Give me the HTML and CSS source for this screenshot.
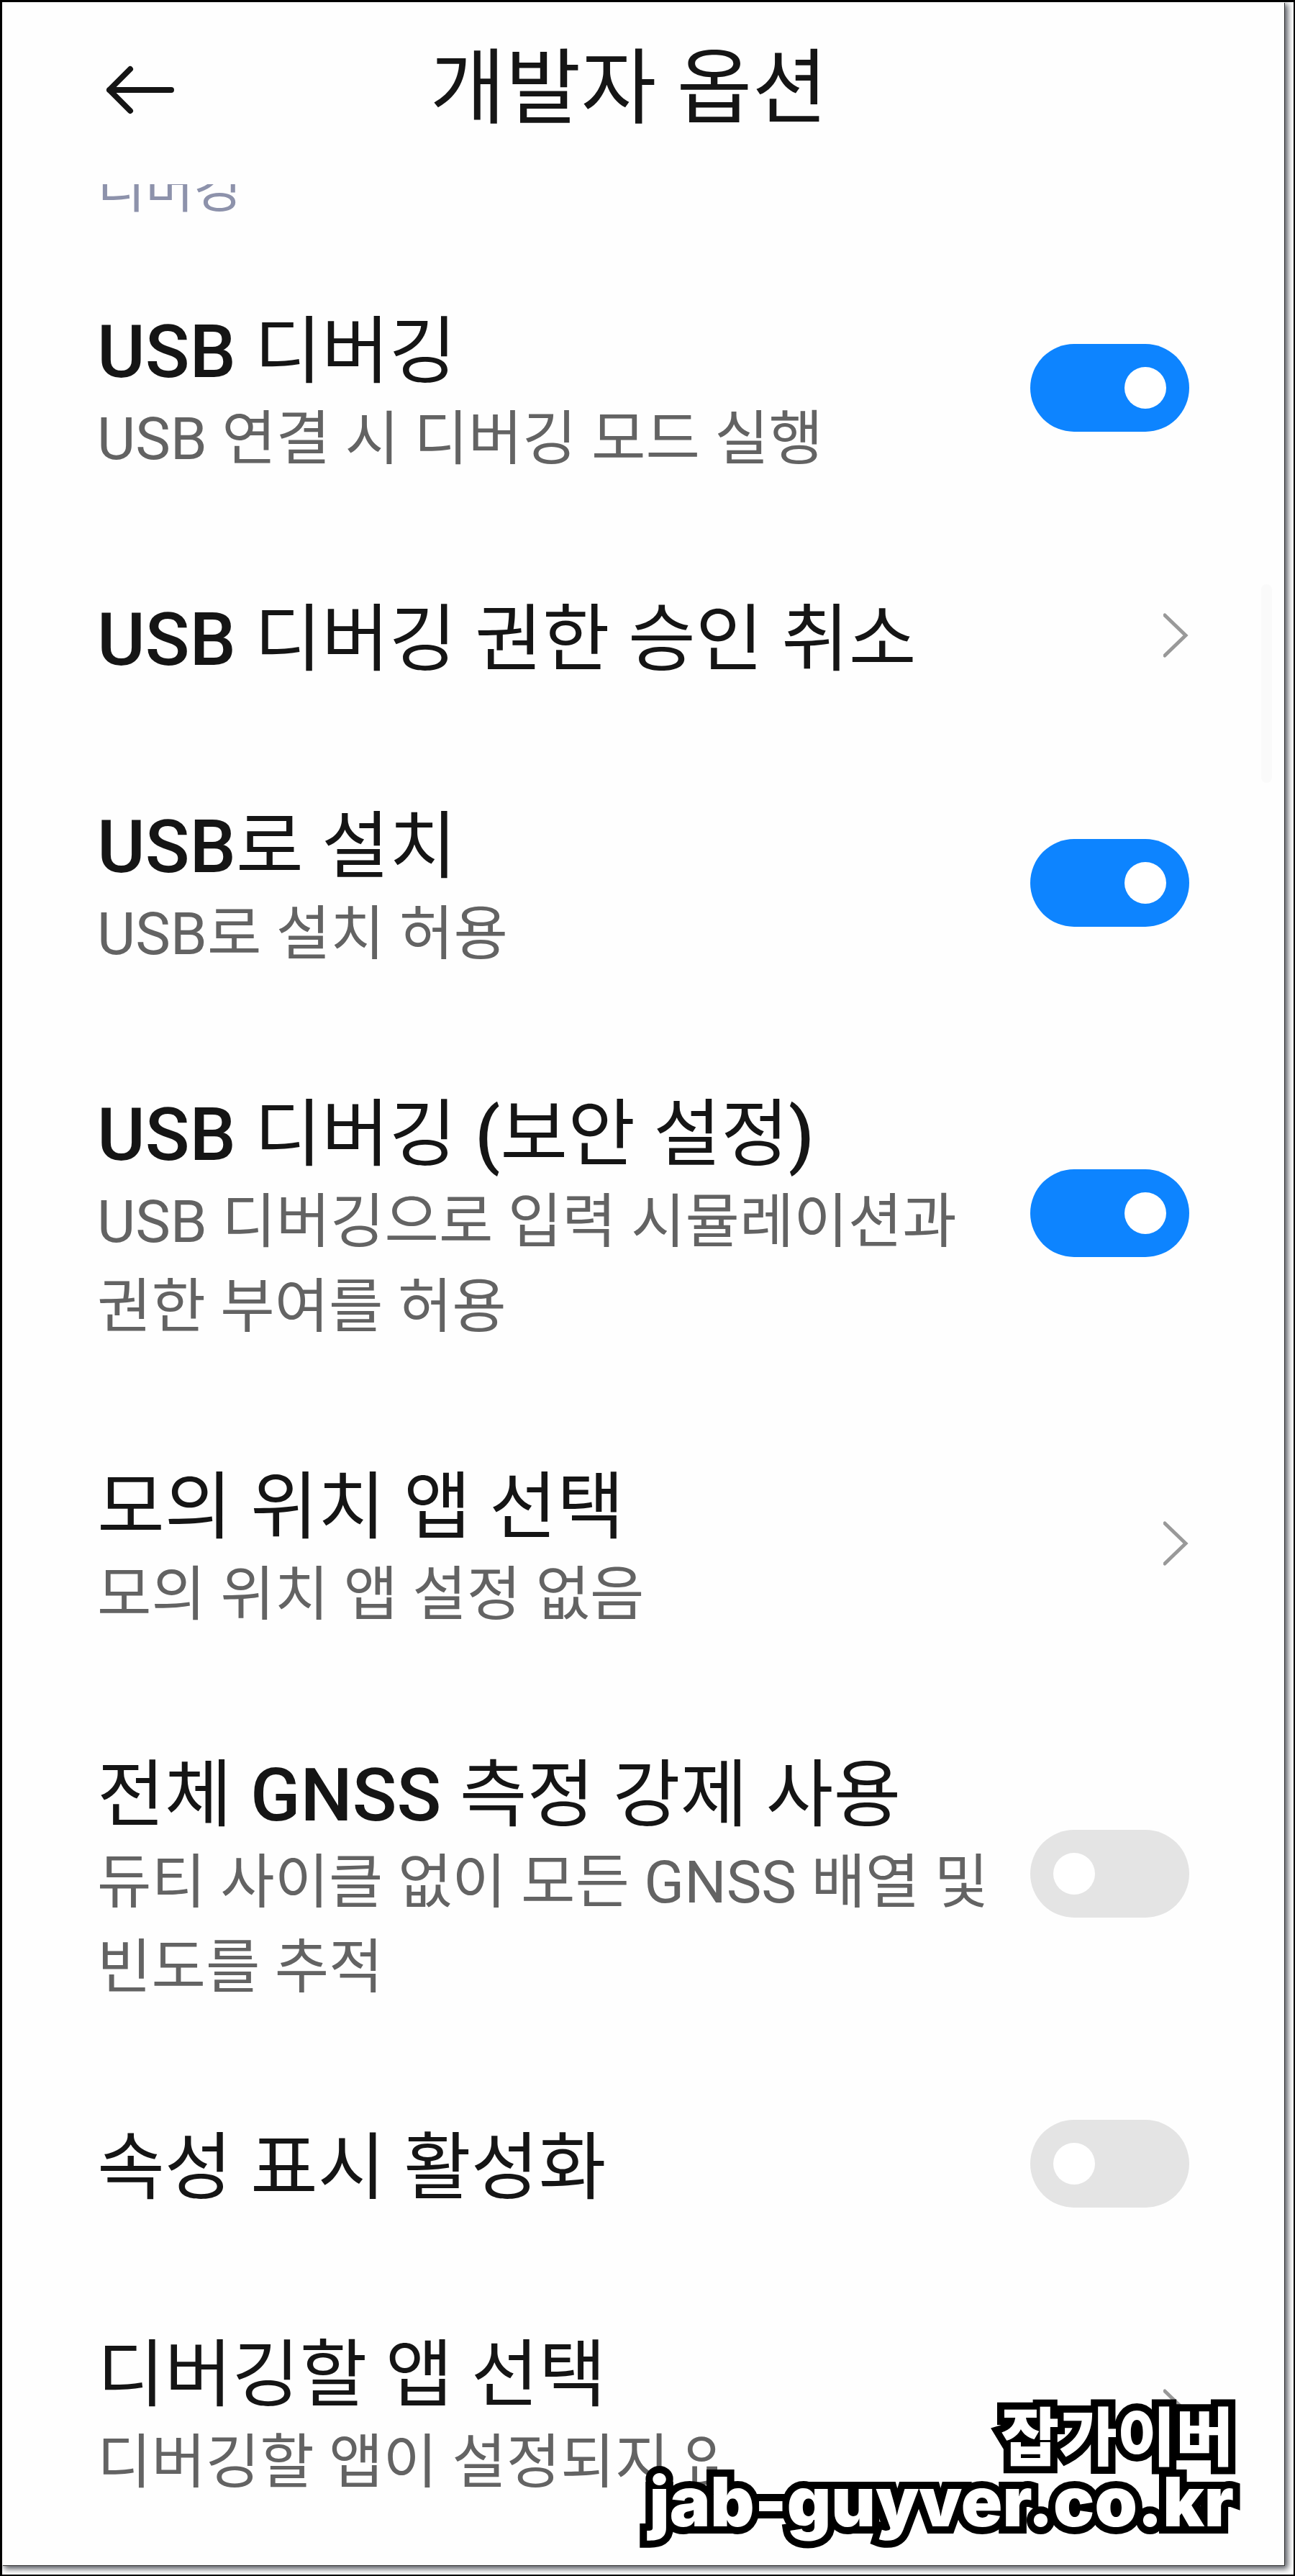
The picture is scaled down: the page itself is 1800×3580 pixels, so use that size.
FILE: index.html
```html
<!DOCTYPE html>
<html lang="ko">
<head>
<meta charset="utf-8">
<meta name="viewport" content="width=device-width, initial-scale=1">
<title>개발자 옵션</title>
<link rel="stylesheet" href="styles.css">
</head>
<body>
<div class="frame">
  <div class="screen">
    <header class="header">
      <button class="back" type="button" aria-label="뒤로">
        <svg width="96" height="68" viewBox="0 0 96 68" fill="none" stroke="#151515" stroke-width="8" stroke-linecap="round" stroke-linejoin="round" aria-hidden="true"><path d="M34 5 5 34l29 29M5 34h86"/></svg>
      </button>
      <h1 class="title">개발자 옵션</h1>
    </header>
    <main>
      <div class="section"><h2 class="section-label">디버깅</h2></div>
      <ul class="list">
        <li><label class="row">
          <span class="text"><span class="name"><b>USB</b> 디버깅</span><span class="note">USB 연결 시 디버깅 모드 실행</span></span>
          <input class="switch" type="checkbox" role="switch" checked>
        </label></li>
        <li><a class="row" href="#revoke">
          <span class="text"><span class="name"><b>USB</b> 디버깅 권한 승인 취소</span></span>
          <svg class="chevron" viewBox="0 0 36 64" aria-hidden="true"><path d="M2 4l29 28L2 60"/></svg>
        </a></li>
        <li><label class="row">
          <span class="text"><span class="name"><b>USB</b>로 설치</span><span class="note">USB로 설치 허용</span></span>
          <input class="switch" type="checkbox" role="switch" checked>
        </label></li>
        <li><label class="row">
          <span class="text"><span class="name"><b>USB</b> 디버깅 <b>(</b>보안 설정<b>)</b></span><span class="note">USB 디버깅으로 입력 시뮬레이션과 권한 부여를 허용</span></span>
          <input class="switch" type="checkbox" role="switch" checked>
        </label></li>
        <li><a class="row" href="#mock-location">
          <span class="text"><span class="name">모의 위치 앱 선택</span><span class="note">모의 위치 앱 설정 없음</span></span>
          <svg class="chevron" viewBox="0 0 36 64" aria-hidden="true"><path d="M2 4l29 28L2 60"/></svg>
        </a></li>
        <li><label class="row">
          <span class="text"><span class="name">전체 <b>GNSS</b> 측정 강제 사용</span><span class="note">듀티 사이클 없이 모든 GNSS 배열 및 빈도를 추적</span></span>
          <input class="switch" type="checkbox" role="switch">
        </label></li>
        <li><label class="row">
          <span class="text"><span class="name">속성 표시 활성화</span></span>
          <input class="switch" type="checkbox" role="switch">
        </label></li>
        <li><a class="row" href="#debug-app">
          <span class="text"><span class="name">디버깅할 앱 선택</span><span class="note note-cut">디버깅할 앱이 설정되지 않음</span></span>
          <svg class="chevron" viewBox="0 0 36 64" aria-hidden="true"><path d="M2 4l29 28L2 60"/></svg>
        </a></li>
      </ul>
    </main>
    <div class="scrollbar"></div>
    <p class="watermark"><span class="mark-ko">잡가이버</span><span class="mark-url">jab-guyver.co.kr</span></p>
  </div>
</div>
</body>
</html>
```
FILE: styles.css
```css
* {
  box-sizing: border-box;
}

body {
  margin: 0;
  background: #fff;
  color: #151515;
  font-family: Roboto, "Noto Sans CJK KR", sans-serif;
}

h1, h2, p, ul {
  margin: 0;
  padding: 0;
  font-weight: 400;
}

/* black outline with the screen casting a shadow to the bottom right */
.frame {
  border: solid #000;
  border-width: 3px 2px 2px 3px;
  padding: 0 13px 13px 0;
  overflow: hidden;
}

.screen {
  position: relative;
  background: #fefefe;
  padding-bottom: 14px;
  box-shadow: 1px 1px 0 #333, 4px 4px 8px 1px #55585f;
}

.header {
  display: grid;
  grid-template-columns: 112px 1fr 152px;
  align-items: center;
  height: 253px;
  padding: 0 132px 9px;
}

.back {
  display: flex;
  border: 0;
  padding: 0 0 0 12px;
  background: none;
}

.title {
  font-size: 114px;
  line-height: 160px;
  padding-bottom: 4px;
  text-align: center;
}

/* heading half scrolled under the header */
.section {
  height: 83px;
  overflow: hidden;
  padding: 0 132px;
}

.section-label {
  margin-top: -43px;
  color: #8d92ab;
  font-size: 73px;
  line-height: 100px;
}

.list {
  list-style: none;
}

.row {
  display: flex;
  align-items: center;
  justify-content: space-between;
  gap: 40px;
  padding: 78px 132px;
  color: inherit;
  text-decoration: none;
}

.text {
  flex: 1;
  min-width: 0;
  padding-top: 12px;
}

.name,
.note {
  display: block;
  word-break: keep-all;
}

.name {
  font-size: 102px;
  line-height: 120px;
}

.name b {
  font-weight: 500;
}

.note {
  margin: 2px 0 -8px;
  color: #636363;
  font-size: 82px;
  line-height: 118px;
}

.note-cut {
  max-width: 862px;
  overflow: hidden;
  white-space: nowrap;
}

.switch {
  appearance: none;
  display: flex;
  align-items: center;
  flex: none;
  width: 221px;
  height: 122px;
  margin: -30px 0;
  padding: 0 32px;
  border-radius: 61px;
  background: #e4e4e4;
}

.switch::before {
  content: "";
  width: 58px;
  height: 58px;
  border-radius: 50%;
  background: #fff;
}

.switch:checked {
  justify-content: flex-end;
  background: #0d84ff;
}

.chevron {
  flex: none;
  width: 36px;
  height: 64px;
  fill: none;
  stroke: #999;
  stroke-width: 5px;
  stroke-linecap: round;
}

.scrollbar {
  position: absolute;
  top: 809px;
  right: 17px;
  width: 15px;
  height: 276px;
  border-radius: 8px;
  background: #fafafa;
}

.watermark {
  position: absolute;
  right: 70px;
  bottom: 40px;
  display: flex;
  flex-direction: column;
  align-items: flex-end;
  color: #fff;
  font-weight: 900;
  line-height: 96px;
  -webkit-text-stroke: 20px #000;
  paint-order: stroke fill;
  stroke-linejoin: round;
}

.mark-ko {
  font-family: "Noto Sans CJK KR", sans-serif;
  font-size: 88px;
}

.mark-url {
  font-family: Inter, sans-serif;
  font-size: 95px;
}
```
